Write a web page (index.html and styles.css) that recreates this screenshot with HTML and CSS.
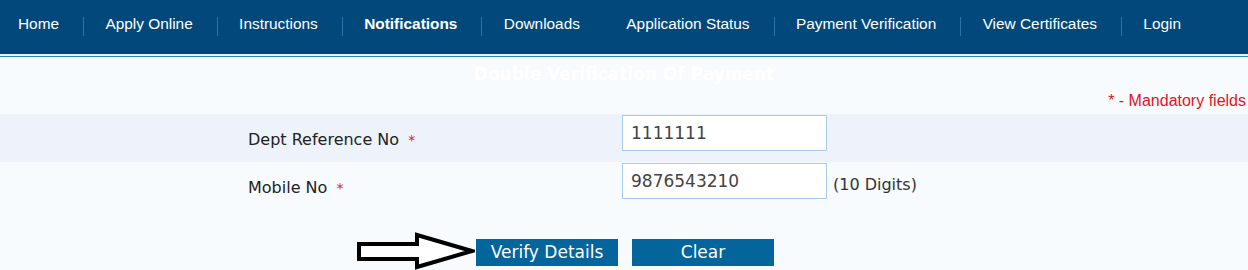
FILE: index.html
```html
<!DOCTYPE html>
<html lang="en">
<head>
  <meta charset="UTF-8">
  <title>Double Verification Of Payment</title>
  <link rel="stylesheet" href="styles.css">
</head>
<body>
  <div class="topnav">
    <ul class="menu">
      <li><a href="#">Home</a></li>
      <li><a href="#">Apply Online</a></li>
      <li><a href="#">Instructions</a></li>
      <li class="active"><a href="#">Notifications</a></li>
      <li class="nosep"><a href="#">Downloads</a></li>
      <li><a href="#">Application Status</a></li>
      <li><a href="#">Payment Verification</a></li>
      <li><a href="#">View Certificates</a></li>
      <li><a href="#">Login</a></li>
    </ul>
  </div>
  <div class="navline"></div>

  <div class="content">
    <h2 class="title">Double Verification Of Payment</h2>
    <p class="mandatory">* - Mandatory fields</p>

    <form id="verify-form">
      <div class="row shaded">
        <label class="lbl" for="dept-ref">Dept Reference No <span class="req">*</span></label>
        <input type="text" id="dept-ref" class="field" value="1111111">
      </div>
      <div class="row">
        <label class="lbl" for="mobile">Mobile No <span class="req">*</span></label>
        <input type="text" id="mobile" class="field" value="9876543210">
        <span class="hint">(10 Digits)</span>
      </div>

      <div class="actions">
        <!-- pointer arrow drawn next to the submit button -->
        <svg class="pointer" width="120" height="38" viewBox="0 0 120 38">
          <path d="M4 12 H62 V3 L117 19 L62 35 V27 H4 Z" fill="#fff" stroke="#000" stroke-width="4" stroke-linejoin="miter"/>
        </svg>
        <button type="submit" class="btn">Verify Details</button>
        <button type="reset" class="btn">Clear</button>
      </div>
    </form>
  </div>
</body>
</html>
```

FILE: styles.css
```css
body {
  margin: 0; padding: 0;
  background: #f7fbfe;
  font-family: "DejaVu Sans", Verdana, sans-serif;
  color: #222;
}
.topnav {
  background: #03487a;
  height: 54px;
  border-bottom: 2px solid #e3f5fb;
}
.navline {
  height: 1px;
  background: #3383b0;
}
.menu {
  list-style: none;
  margin: 0;
  padding: 17px 0 0 0;
  display: flex;
  align-items: flex-start;
}
.menu li {
  height: 19px;
  border-right: 1px solid #2a74aa;
}
.menu li:last-child {
  border-right: none;
}
.menu li.nosep {
  border-right-color: transparent;
}
.menu a {
  display: block;
  padding: 0 24px 0 21.4px;
  font-family: "Liberation Sans", Arial, sans-serif;
  font-size: 15.4px;
  line-height: 13px;
  color: #fff;
  text-decoration: none;
}
.menu li:first-child a {
  padding-left: 18px;
}
.menu li.active a {
  font-weight: bold;
}
.title {
  margin: 7px 0 0 0;
  text-align: center;
  font-size: 17px;
  line-height: 20px;
  font-weight: bold;
  color: #fff;
}
.mandatory {
  margin: 8px 2px 0 0;
  text-align: right;
  font-family: "Liberation Sans", Arial, sans-serif;
  font-size: 16px;
  line-height: 18px;
  color: #e3151c;
}
#verify-form {
  margin-top: 4px;
}
.row {
  display: flex;
  align-items: flex-start;
  height: 48px;
  padding-left: 248px;
  box-sizing: border-box;
}
.row.shaded {
  background: #eef3fb;
}
.lbl {
  width: 374px;
  padding-top: 16px;
  font-size: 16px;
  line-height: 19px;
  color: #222;
}
.req {
  margin-left: 4px;
  font-size: 14px;
  color: #e3151c;
}
.field {
  margin: 1px 0 0 0;
  width: 205px;
  height: 36px;
  box-sizing: border-box;
  padding: 0 8px;
  border: 1px solid #a9cce8;
  background: #fff;
  font-family: "DejaVu Sans", Verdana, sans-serif;
  font-size: 17px;
  color: #444;
  outline: none;
}
.hint {
  margin: 13px 0 0 6px;
  font-size: 16px;
  line-height: 19px;
  color: #333;
}
.actions {
  display: flex;
  align-items: flex-start;
  padding-left: 355px;
  margin-top: 22px;
}
.pointer {
  display: block;
  margin-right: 1px;
}
.btn {
  margin-top: 7px;
  width: 142px;
  height: 27px;
  padding: 0;
  border: none;
  background: #03659b;
  color: #fff;
  font-family: "DejaVu Sans", Verdana, sans-serif;
  font-size: 17px;
  line-height: 27px;
  cursor: pointer;
}
.btn + .btn {
  margin-left: 14px;
}
```
